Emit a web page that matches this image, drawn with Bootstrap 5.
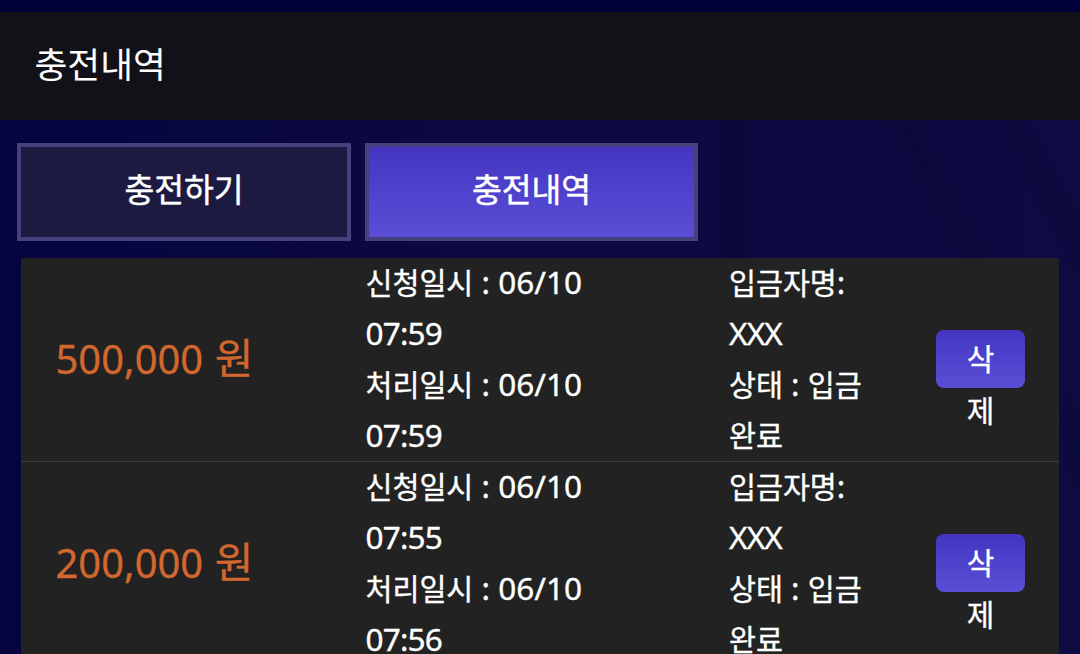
<!doctype html>
<html lang="ko">
<head>
<meta charset="utf-8">
<title>충전내역</title>
<link rel="stylesheet" href="https://cdn.jsdelivr.net/npm/bootstrap@5.3.0/dist/css/bootstrap.min.css">
<style>
html,body{height:100%;overflow:hidden}
body{font-family:"Noto Sans CJK KR","Noto Sans",sans-serif;color:#fff;font-size:29.3px;line-height:51px;-webkit-text-stroke:.35px #fff;
background:
 linear-gradient(#01013a 0 12px,transparent 12px),
 linear-gradient(90deg,transparent 712px,rgba(0,0,25,.14) 726px,rgba(0,0,25,.14) 742px,transparent 756px),
 linear-gradient(62deg,transparent 81%,rgba(0,0,25,.14) 83%,transparent 85%),
 linear-gradient(62deg,transparent 89%,rgba(0,0,25,.12) 90.6%,transparent 92.5%),
 linear-gradient(90deg,#060440 0,#0a083f 30%,#0d0b42 100%);}
.ltn{font-family:"Noto Sans",sans-serif;font-size:31.5px;line-height:1}
.tm{letter-spacing:-.8px}
.top-head{margin-top:12px;height:108px;background:#131118;padding:0 0 7px 34.5px;font-size:35.7px;font-weight:400;-webkit-text-stroke:0}
.tab-strip{padding:23px 0 0 17px;gap:14px}
.tab-btn{width:334px;height:98px;border:4px solid #46407f;border-radius:0;color:#fff;font-size:32.4px;font-weight:400;background:#1c1a40;line-height:1;padding:0 0 7px;-webkit-text-stroke:.45px #fff}
.tab-btn:hover{color:#fff;background:#1c1a40;border-color:#46407f}
.tab-btn.on,.tab-btn.on:hover{width:333px;background:linear-gradient(#4335c0,#5a4ed6);border-color:#46407f}
.hist{margin:17px 21px 0;background:#222}
.hist-row{border-bottom:1px solid #3a3a3a;height:204px}
.c-amt{width:310px;padding:0 0 8px 34.5px;color:#d2682f;font-size:42px;-webkit-text-stroke:.3px #d2682f}
.c-amt .ltn{font-size:39.9px}
.c-date{width:363px;padding:0 60px 4px 34.5px}
.c-name{width:207px;padding:0 35px 4px}
.c-del{padding-left:35px}
.del-btn{display:block;width:89px;height:58px;margin-bottom:1px;padding:1px 20px 0;border:0;border-radius:8px;color:#fff;font-size:30px;line-height:52px;background:linear-gradient(#4335c0,#5a4ed6);word-break:break-all;overflow:visible;text-align:center}
</style>
</head>
<body>
<div class="top-head d-flex align-items-center">충전내역</div>
<div class="tab-strip d-flex">
  <a class="btn tab-btn d-flex align-items-center justify-content-center" href="#">충전하기</a>
  <a class="btn tab-btn on d-flex align-items-center justify-content-center" href="#">충전내역</a>
</div>
<div class="hist">
  <div class="hist-row d-flex align-items-center">
    <div class="c-amt"><span class="ltn">500,000</span> 원</div>
    <div class="c-date">신청일시 <span class="ltn">: 06/10</span> <span class="ltn tm">07:59</span><br>처리일시 <span class="ltn">: 06/10</span> <span class="ltn tm">07:59</span></div>
    <div class="c-name">입금자명<span class="ltn">:</span> <span class="ltn tm">XXX</span><br>상태 <span class="ltn">:</span> 입금<br>완료</div>
    <div class="c-del"><button class="del-btn" type="button">삭제</button></div>
  </div>
  <div class="hist-row d-flex align-items-center">
    <div class="c-amt"><span class="ltn">200,000</span> 원</div>
    <div class="c-date">신청일시 <span class="ltn">: 06/10</span> <span class="ltn tm">07:55</span><br>처리일시 <span class="ltn">: 06/10</span> <span class="ltn tm">07:56</span></div>
    <div class="c-name">입금자명<span class="ltn">:</span> <span class="ltn tm">XXX</span><br>상태 <span class="ltn">:</span> 입금<br>완료</div>
    <div class="c-del"><button class="del-btn" type="button">삭제</button></div>
  </div>
</div>
<script src="https://cdn.jsdelivr.net/npm/bootstrap@5.3.0/dist/js/bootstrap.bundle.min.js"></script>
</body>
</html>
